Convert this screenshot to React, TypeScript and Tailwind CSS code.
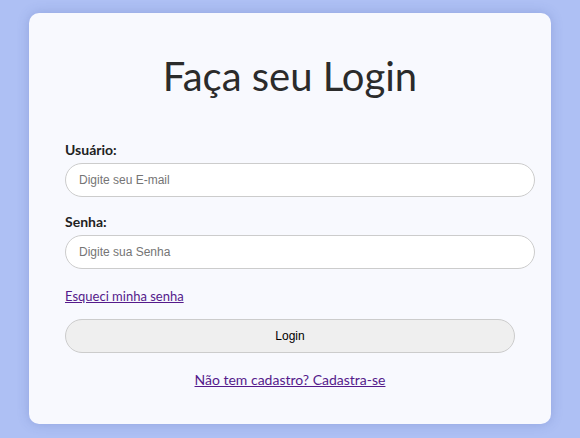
export default function App() {
  return (
    <div className="min-h-[438px] w-full bg-[#aec0f4] pt-[13px] px-[29px] font-['Lato','Liberation_Sans',sans-serif]">
      <div className="w-[522px] h-[411px] rounded-[10px] bg-[#f8f9fe] shadow-[0_0_12px_rgba(60,80,160,0.25)] px-[36px] pt-[35px]">
        <h1 className="text-center text-[40px] leading-[56px] text-[#2b2b2b] font-normal">Faça seu Login</h1>

        <form className="mt-[37px] flex flex-col" onSubmit={(e) => e.preventDefault()}>
          <label className="text-[14px] leading-[18px] font-bold text-[#222]">Usuário:</label>
          <input
            type="email"
            placeholder="Digite seu E-mail"
            className="mt-[4px] w-[470px] h-[34px] rounded-full border border-[#cccccc] bg-white px-[13px] text-[12px] font-['Liberation_Sans',sans-serif] placeholder:text-[#757575] outline-none"
          />

          <label className="mt-[16px] text-[14px] leading-[18px] font-bold text-[#222]">Senha:</label>
          <input
            type="password"
            placeholder="Digite sua Senha"
            className="mt-[4px] w-[470px] h-[34px] rounded-full border border-[#cccccc] bg-white px-[13px] text-[12px] font-['Liberation_Sans',sans-serif] placeholder:text-[#757575] outline-none"
          />

          <div className="mt-[17px] leading-[17px]">
            <a href="#" className="text-[13px] leading-[17px] text-[#551a8b] underline">Esqueci minha senha</a>
          </div>

          <button
            type="submit"
            className="mt-[14px] w-[450px] h-[34px] rounded-full border border-[#cccccc] bg-[#efefef] text-[12px] text-black font-['Liberation_Sans',sans-serif]"
          >
            Login
          </button>

          <div className="mt-[17px] text-center leading-[18px]">
            <a href="#" className="text-[14px] leading-[18px] text-[#551a8b] underline">Não tem cadastro? Cadastra-se</a>
          </div>
        </form>
      </div>
    </div>
  );
}
